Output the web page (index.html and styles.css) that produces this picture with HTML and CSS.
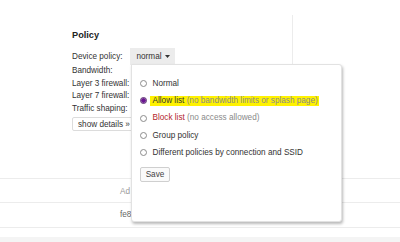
FILE: index.html
```html
<!DOCTYPE html>
<html lang="en">
<head>
    <meta charset="UTF-8">
    <title>Client policy</title>
    <link rel="stylesheet" href="styles.css">
</head>
<body>
    <div class="top">
        <div class="policy">
            <h2 class="policy-title">Policy</h2>

            <div class="device-row">
                <span class="field-label">Device policy:</span>
                <div class="dropdown">
                    <span>normal</span>
                    <svg class="caret" width="5" height="3" viewBox="0 0 5 3"><path d="M0 0h5L2.5 3z" fill="#333"/></svg>

                    <div class="menu">
                        <label class="opt">
                            <input type="radio" name="policy">
                            <span class="opt-text">Normal</span>
                        </label>
                        <label class="opt">
                            <input type="radio" name="policy" checked>
                            <span class="opt-text marked">Allow list <span class="hint">(no bandwidth limits or splash page)</span></span>
                        </label>
                        <label class="opt">
                            <input type="radio" name="policy">
                            <span class="opt-text"><span class="danger">Block list</span> <span class="hint">(no access allowed)</span></span>
                        </label>
                        <label class="opt">
                            <input type="radio" name="policy">
                            <span class="opt-text">Group policy</span>
                        </label>
                        <label class="opt">
                            <input type="radio" name="policy">
                            <span class="opt-text">Different policies by connection and SSID</span>
                        </label>
                        <button class="btn-save">Save</button>
                    </div>
                </div>
            </div>

            <div class="field-row">Bandwidth:</div>
            <div class="field-row">Layer 3 firewall:</div>
            <div class="field-row">Layer 7 firewall:</div>
            <div class="field-row">Traffic shaping:</div>

            <button class="btn-details">show details &raquo;</button>
        </div>
        <div class="divider"></div>
    </div>

    <div class="table">
        <div class="trow trow-head"><span class="cell head-cell">Ad</span></div>
        <div class="trow"><span class="cell">fe8</span></div>
        <div class="trow trow-end"></div>
    </div>
    <div class="footer"></div>
</body>
</html>
```

FILE: styles.css
```css
* {
    margin: 0;
    padding: 0;
    box-sizing: border-box;
}

body {
    font-family: "Liberation Sans", Arial, sans-serif;
    font-size: 8.2px;
    color: #333;
    background: #fff;
    height: 242px;
    display: flex;
    flex-direction: column;
    overflow: hidden;
}

.top {
    display: flex;
    height: 178px;
    padding-top: 15px;
}

.policy {
    width: 292px;
    padding: 14px 0 0 72px;
}

.divider {
    border-left: 1px solid #ececec;
}

.policy-title {
    font-size: 9.2px;
    font-weight: bold;
    line-height: 12px;
    color: #222;
    margin-bottom: 7px;
}

.device-row {
    display: flex;
    align-items: center;
    height: 17px;
}

.field-label {
    width: 58px;
}

.dropdown {
    position: relative;
    display: flex;
    align-items: center;
    gap: 3px;
    height: 17px;
    padding: 0 5px 0 6.5px;
    background: #ececec;
}

.caret {
    display: block;
}

.menu {
    position: absolute;
    left: 1px;
    top: 16px;
    width: 211px;
    height: 158px;
    padding: 10px 0 0 8px;
    background: #fff;
    border: 1px solid #e2e2e2;
    border-radius: 0 3px 3px 3px;
    box-shadow: 1px 2px 3px rgba(0,0,0,0.28);
    z-index: 2;
}

.opt {
    display: flex;
    align-items: center;
    height: 17.25px;
    white-space: nowrap;
}

.opt input {
    appearance: none;
    -webkit-appearance: none;
    width: 7px;
    height: 7px;
    margin: 0 3px 0 0;
    border: 1px solid #8c8c8c;
    border-radius: 50%;
    background: #fff;
}

.opt input:checked {
    border-color: #5a2a70;
    background: radial-gradient(circle, #6a1591 55%, #cdb6da 70%);
}

.opt-text {
    padding: 0 0 0 2.5px;
    line-height: 9.5px;
}

.marked {
    background: #fff200;
    padding-right: 1px;
}

.hint {
    color: #8a8a8a;
}

.danger {
    color: #b3262c;
}

.btn-save {
    margin-top: 5.5px;
    width: 30px;
    height: 15px;
    font-family: inherit;
    font-size: 8.2px;
    color: #444;
    background: #fafafa;
    border: 1px solid #cfcfcf;
    border-radius: 2px;
}

.field-row {
    height: 12.5px;
    line-height: 12.5px;
}

.btn-details {
    margin-top: 2px;
    height: 14px;
    padding: 0 6px 0 5px;
    font-family: inherit;
    font-size: 8.2px;
    color: #333;
    background: #fff;
    border: 1px solid #dcdcdc;
    border-radius: 2px;
}

.table {
    display: flex;
    flex-direction: column;
}

.trow {
    height: 25px;
    border-top: 1px solid #ececec;
    padding: 6px 0 0 120px;
    line-height: 12px;
}

.trow-head {
    height: 24px;
    padding-top: 7px;
}

.trow-end {
    height: 10px;
    padding: 0;
}

.cell {
    color: #666;
}

.head-cell {
    color: #999;
}

.footer {
    flex: 1;
    background: #f4f4f4;
}
```
